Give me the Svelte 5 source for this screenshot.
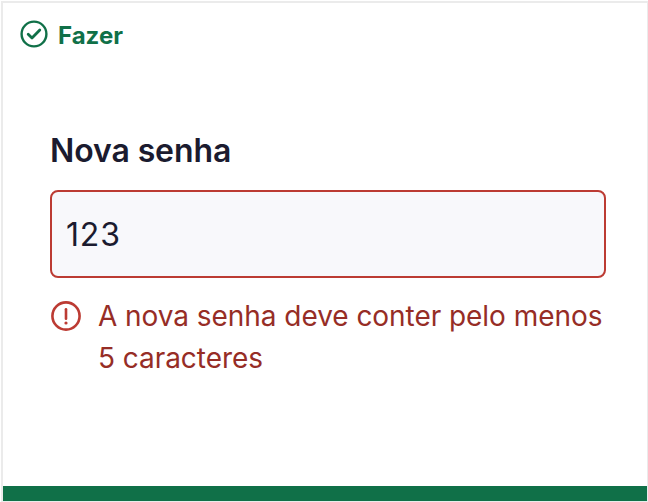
<script>
  const status = 'Fazer';
  const label = 'Nova senha';
  const message = 'A nova senha deve conter pelo menos 5 caracteres';
  let password = $state('123');
</script>

<main class="frame">
  <section class="card">
    <header class="status">
      <svg width="28" height="28" viewBox="0 0 28 28" fill="none" aria-hidden="true">
        <circle cx="14" cy="14" r="12.4" />
        <path d="M8.2 14.2 12 18 19.8 10" />
      </svg>
      <span>{status}</span>
    </header>

    <div class="field">
      <label for="password">{label}</label>
      <input id="password" type="text" bind:value={password} aria-invalid="true" aria-describedby="error" />
      <div class="error" id="error">
        <svg width="30" height="30" viewBox="0 0 30 30" fill="none" aria-hidden="true">
          <circle cx="15" cy="15" r="13.6" />
          <path d="M15 8.2v9.6" />
          <circle class="dot" cx="15" cy="22" r="1.6" />
        </svg>
        <p>{message}</p>
      </div>
    </div>
  </section>
</main>

<style>
  :global(body) {
    margin: 0;
    background: #fff;
  }

  .frame {
    box-sizing: border-box;
    width: 648px;
    height: 502px;
    padding: 1px 0 0 1px;
    font-family: Inter, "Liberation Sans", sans-serif;
  }

  .card {
    box-sizing: border-box;
    height: 500px;
    border: solid #ebebeb;
    border-width: 2px 1px 1px 2px;
    height: 501px;
    background: linear-gradient(#107048, #107048) bottom / 100% 15px no-repeat #fff;
  }

  .status {
    display: flex;
    align-items: flex-start;
    gap: 10px;
    height: 29px;
    padding: 17px 0 0 17px;
    color: #107048;
    font-size: 24px;
    font-weight: 700;
    line-height: 32px;
  }

  svg {
    flex: none;
  }

  .status svg {
    stroke: #107048;
    stroke-width: 2.4;
  }

  .status svg path {
    stroke-width: 2.8;
    stroke-linecap: round;
    stroke-linejoin: round;
  }

  .field {
    display: flex;
    flex-direction: column;
    width: 556px;
    padding: 78px 0 0 47px;
  }

  label {
    color: #1b1b2f;
    font-size: 32px;
    font-weight: 600;
    line-height: 48px;
    letter-spacing: -0.1px;
  }

  input {
    box-sizing: border-box;
    width: 556px;
    height: 88px;
    margin: 15px 0 0;
    padding: 0 14px;
    border: 2px solid #bc3b33;
    border-radius: 8px;
    outline: none;
    background: #f8f8fb;
    color: #1b1b2f;
    font: 400 32px/48px Inter, "Liberation Sans", sans-serif;
    letter-spacing: 0.8px;
  }

  .error {
    display: flex;
    align-items: flex-start;
    gap: 17px;
    padding-top: 17px;
  }

  .error svg {
    margin: 6px 0 0 1px;
    stroke: #bc3b33;
    stroke-width: 2.6;
  }

  .error svg path {
    stroke-width: 2.6;
    stroke-linecap: round;
  }

  .error .dot {
    fill: #bc3b33;
    stroke: none;
  }

  p {
    flex: 1;
    margin: 0 -2px 0 0;
    color: #962d26;
    font-size: 28px;
    line-height: 42px;
    letter-spacing: -0.05px;
  }
</style>
